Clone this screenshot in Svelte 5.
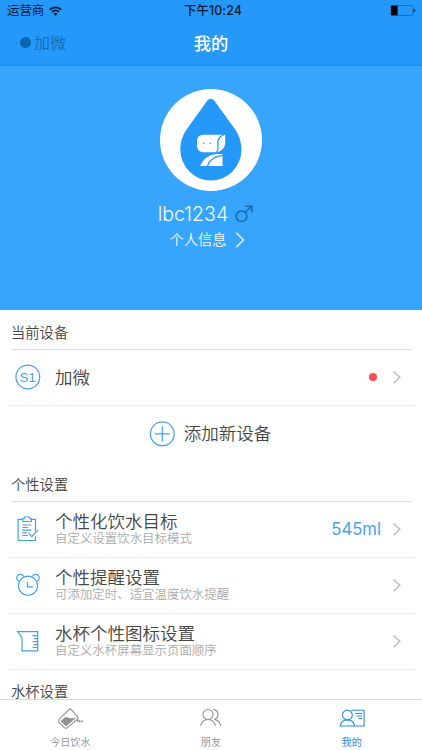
<script>
  const settings = [
    { icon: 'goal', title: '个性化饮水目标', note: '自定义设置饮水目标模式', value: '545ml' },
    { icon: 'alarm', title: '个性提醒设置', note: '可添加定时、适宜温度饮水提醒', value: '' },
    { icon: 'cup', title: '水杯个性图标设置', note: '自定义水杯屏幕显示页面顺序', value: '' }
  ];
  const tabs = [
    { id: 'today', label: '今日饮水' },
    { id: 'friends', label: '朋友' },
    { id: 'mine', label: '我的' }
  ];
  let active = $state('mine');
</script>

{#snippet chevron()}
  <svg class="chevron" width="10" height="16" viewBox="0 0 10 16"><path d="M1.500 2.300 7.800 8.300l-6.300 6" /></svg>
{/snippet}

<div class="screen">
  <header>
    <div class="status">
      <div class="carrier">
        <span>运营商</span>
        <svg width="13" height="10" viewBox="0 0 13 10">
          <g fill="none" stroke="#06182b" stroke-width="1.7">
            <path d="M.8 3.6a8.2 8.2 0 0 1 11.4 0" />
            <path d="M2.9 5.9a5.1 5.1 0 0 1 7.2 0" />
          </g>
          <path d="M6.5 9.8 4.5 7.7a2.9 2.9 0 0 1 4 0z" fill="#06182b" />
        </svg>
      </div>
      <div class="clock">下午10:24</div>
      <svg class="battery" width="26" height="11" viewBox="0 0 26 11">
        <rect x="1" y=".5" width="22" height="10" rx="1" fill="none" stroke="#17619f" stroke-width=".8" />
        <rect x="1" y=".8" width="6.6" height="9.4" rx=".5" />
        <path d="M23.7 3.8q1.500.4 1.500 1.700t-1.500 1.700z" fill="#06182b" />
      </svg>
    </div>
    <nav>
      <div class="device"><i></i>加微</div>
      <h1>我的</h1>
      <span></span>
    </nav>
  </header>

  <section class="profile">
    <svg class="avatar" width="102" height="102" viewBox="0 0 102 102">
      <circle cx="51" cy="51" r="51" fill="#fff" />
      <path d="M47.2 11.800Q50.800 7.600 54.400 11.800L74.500 39.500C79 45.700 81.500 53 81.500 60.500A30.600 31 0 0 1 20.300 60.500C20.300 53 22.800 45.700 27.300 39.500Z" fill="#2499f9" />
      <path d="M43 45.700H62.500Q57.300 48 57.300 53V59Q57.300 63.300 54 63.300H42.500Q37 62.500 37 57V51.500Q37 46.500 43 45.700Z" fill="#fff" />
      <path d="M65.200 45.700V55.500Q63.800 61 57.200 63.500Q58.600 61.500 58.600 59V53.500Q58.800 47.800 65.200 45.700Z" fill="#fff" />
      <circle cx="43.800" cy="54.300" r=".7" fill="#2499f9" />
      <circle cx="50.300" cy="54.300" r=".7" fill="#2499f9" />
      <path d="M40 77Q44.500 66.500 56 65H62.300V65.800Q49.500 67.500 46.800 77Z" fill="#fff" />
      <path d="M48.200 77Q50.800 68.500 62.500 67V77Z" fill="#fff" />
    </svg>
    <div class="name">
      <span>lbc1234</span>
      <svg width="18" height="18" viewBox="0 0 18 18">
        <g fill="none" stroke="#1769ad" stroke-width="1.500">
          <circle cx="6.500" cy="11.300" r="5.300" />
          <path d="M10.400 7.400 16.600 1.300M10.500 1.300h6.300v6.300" />
        </g>
      </svg>
    </div>
    <div class="info">
      <span>个人信息</span>
      <svg width="10" height="16" viewBox="0 0 10 16"><path d="M1.300.8 8.500 8l-7.200 7.200" fill="none" stroke="#f4faff" stroke-width="1.300" /></svg>
    </div>
  </section>

  <main>
    <h2>当前设备</h2>
    <div class="row current">
      <svg class="icon" width="26" height="26" viewBox="0 0 26 26">
        <circle cx="12.800" cy="13" r="11.900" />
        <text x="12.800" y="17.600" text-anchor="middle">S1</text>
      </svg>
      <div class="words"><b>加微</b></div>
      <i class="alert"></i>
      {@render chevron()}
    </div>
    <div class="add">
      <svg class="icon" width="26" height="26" viewBox="0 0 26 26">
        <circle cx="13.300" cy="12.800" r="11.900" />
        <path d="M5.800 12.800h15M13.300 5.300v15" />
      </svg>
      <span>添加新设备</span>
    </div>

    <h2>个性设置</h2>
    {#each settings as item}
      <div class="row">
        <svg class="icon" width="26" height="26" viewBox="0 0 26 26">
          {#if item.icon === 'goal'}
            <path d="M7.500 3.300H3.100V24.500H20.500V20.500M16.400 3.300H20.500V15.500M7.500 5.500V2.900H9L9.500 1H14.600L15 2.900H16.400V5.500Z" />
            <path d="M7.300 9h9M7.300 11.500h6M7.300 14.200h9M7.300 16.800h4.500M7.300 19.500h5.500M13.500 17.200l3.300 3.400 6-6.400" />
          {:else if item.icon === 'alarm'}
            <circle cx="13" cy="13.700" r="9.600" />
            <path d="M3.700 9.200A3.600 3.600 0 1 1 8.600 4.600M17.400 4.600A3.600 3.600 0 1 1 22.300 9.200M12.500 10v4.800h5.500" />
          {:else}
            <path d="M2.700 3.600H22.700V22.900H7V9.600Z" />
            <path d="M17.500 7.700h5M19 10.700h3.500M17.500 13.700h5M19 16.600h3.500M17.500 19.500h5" />
          {/if}
        </svg>
        <div class="words"><b>{item.title}</b><small>{item.note}</small></div>
        {#if item.value}<span class="value">{item.value}</span>{/if}
        {@render chevron()}
      </div>
    {/each}
    <h2 class="last">水杯设置</h2>
  </main>

  <footer>
    {#each tabs as tab}
      <button class:active={active === tab.id} onclick={() => (active = tab.id)}>
        <svg width="28" height="22" viewBox="0 0 28 22">
          {#if tab.id === 'today'}
            <g transform="translate(.6 -.3)">
              <path d="M12 2.200Q13.600.7 15 2.200L20.800 9Q22 10.500 20.500 11.800L10.500 20.100Q8.900 21.200 7.600 19.800L2.500 14.600Q1.200 13 2.600 11.500Z" />
              <path d="M4 13.300 8.500 9.600Q10.500 9.200 12.500 10.200T18.800 9.700L19 10.500 10 18.200Q9.200 18.700 8.500 18Z" fill="#929292" stroke="none" />
              <path d="M21 14.300v-1.500q1.500-1 2 .7v1.300M24.500 14.500v-1.200q1-.8 1.800.7" />
            </g>
          {:else if tab.id === 'friends'}
            <circle cx="11" cy="6.500" r="5" />
            <path d="M3.600 18Q5 11.500 11 11.500T18.500 18M16.200 1.600a5 5 0 0 1 1.200 9.800Q22.600 12.500 23.700 18" />
          {:else}
            <circle cx="9.400" cy="7" r="4.900" />
            <path d="M2.300 18Q3 11.900 9.400 11.900T16.600 18ZM13 2.200H26.100V18H16.600M17.500 5.500h6.500M18.500 8h5.500M20.500 10.500h3.500" />
          {/if}
        </svg>
        <span>{tab.label}</span>
      </button>
    {/each}
  </footer>
</div>

<style>
  :global(body) { margin: 0; }
  .screen {
    width: 422px; height: 750px; overflow: hidden;
    display: flex; flex-direction: column; background: #fff; color: #464646;
    font-family: Inter, "Noto Sans CJK SC", sans-serif; font-weight: 350;
  }
  header { height: 65px; flex: none; background: #2499fa; border-bottom: 1px solid #218de5; }
  .status { height: 21px; display: grid; grid-template-columns: 1fr auto 1fr; align-items: center; padding: 0 6px 0 7px; color: #06182b; font-size: 12.400px; font-weight: 400; line-height: 20px; }
  .carrier { display: flex; align-items: center; gap: 5px; }
  .clock { font-weight: 500; padding-left: 3px; letter-spacing: .1px; }
  .battery { justify-self: end; }
  nav { height: 44px; display: grid; grid-template-columns: 1fr auto 1fr; align-items: center; padding: 0 20px; font-size: 17.300px; }
  .device { display: flex; align-items: center; gap: 3px; color: #166db7; font-size: 16px; line-height: 22px; padding-bottom: 1px; }
  .device i { width: 11px; height: 11px; border-radius: 50%; background: #0c66b0; }
  h1 { margin: 0; padding-top: 1px; font-size: 17.300px; line-height: 24px; color: #fff; font-weight: 500; }
  .profile { height: 244px; flex: none; box-sizing: border-box; padding-top: 23px; display: flex; flex-direction: column; align-items: center; background: #37a5fc; color: #f4faff; }
  .name { display: flex; align-items: center; gap: 7px; height: 28px; margin-top: 9px; padding-right: 11px; font-size: 19.600px; font-weight: 300; }
  .info { display: flex; align-items: center; gap: 8px; height: 24px; padding-right: 8px; font-size: 14.300px; line-height: 20px; }
  .info span { padding-bottom: 1px; }
  main { flex: 1; min-height: 0; overflow: hidden; }
  h2 { margin: 0 11px; box-sizing: border-box; height: 40px; padding-top: 13px; font-size: 14.300px; line-height: 20px; font-weight: 350; border-bottom: 1px solid #dcdcdc; }
  .last { height: 29px; padding-top: 15px; line-height: 14px; border: 0; }
  .row { height: 56px; box-sizing: border-box; margin: 0 8px; padding: 0 12px 1px 7px; display: flex; align-items: center; border-bottom: 1px solid #e9e9e9; }
  .icon { flex: none; fill: none; stroke: #439ff2; stroke-width: 1.200; }
  .icon text { font: 400 13px "Liberation Sans", sans-serif; fill: #439ff2; stroke: none; }
  .words { flex: 1; padding-left: 14px; display: flex; flex-direction: column; }
  .words b { font-size: 17.500px; line-height: 20px; font-weight: 350; }
  .words small { font-size: 12.450px; line-height: 14px; color: #aaa; }
  .current .words b { padding-top: 2px; }
  .alert { width: 8px; height: 8px; border-radius: 50%; background: #fb4b4e; margin-right: 15px; }
  .value { font-size: 16.700px; font-weight: 400; color: #43a5ee; margin-right: 11px; }
  .chevron { fill: none; stroke: #c5c5c9; stroke-width: 1.700; }
  .add { height: 56px; display: flex; align-items: center; justify-content: center; gap: 9px; padding-right: 2px; box-sizing: border-box; font-size: 17.500px; line-height: 24px; }
  .add span { padding-bottom: 1px; }
  footer { flex: none; height: 51px; box-sizing: border-box; border-top: 1px solid #d9d9d9; display: grid; grid-template-columns: repeat(3, 1fr); background: #fff; }
  button { border: 0; background: none; padding: 8px 0 0; display: flex; flex-direction: column; align-items: center; gap: 4px; color: #929292; font: 350 10.200px/16px Inter, "Noto Sans CJK SC", sans-serif; }
  button svg { flex: none; fill: none; stroke: currentColor; stroke-width: 1.100; }
  button.active { color: #2b8ce5; font-weight: 400; }
</style>
